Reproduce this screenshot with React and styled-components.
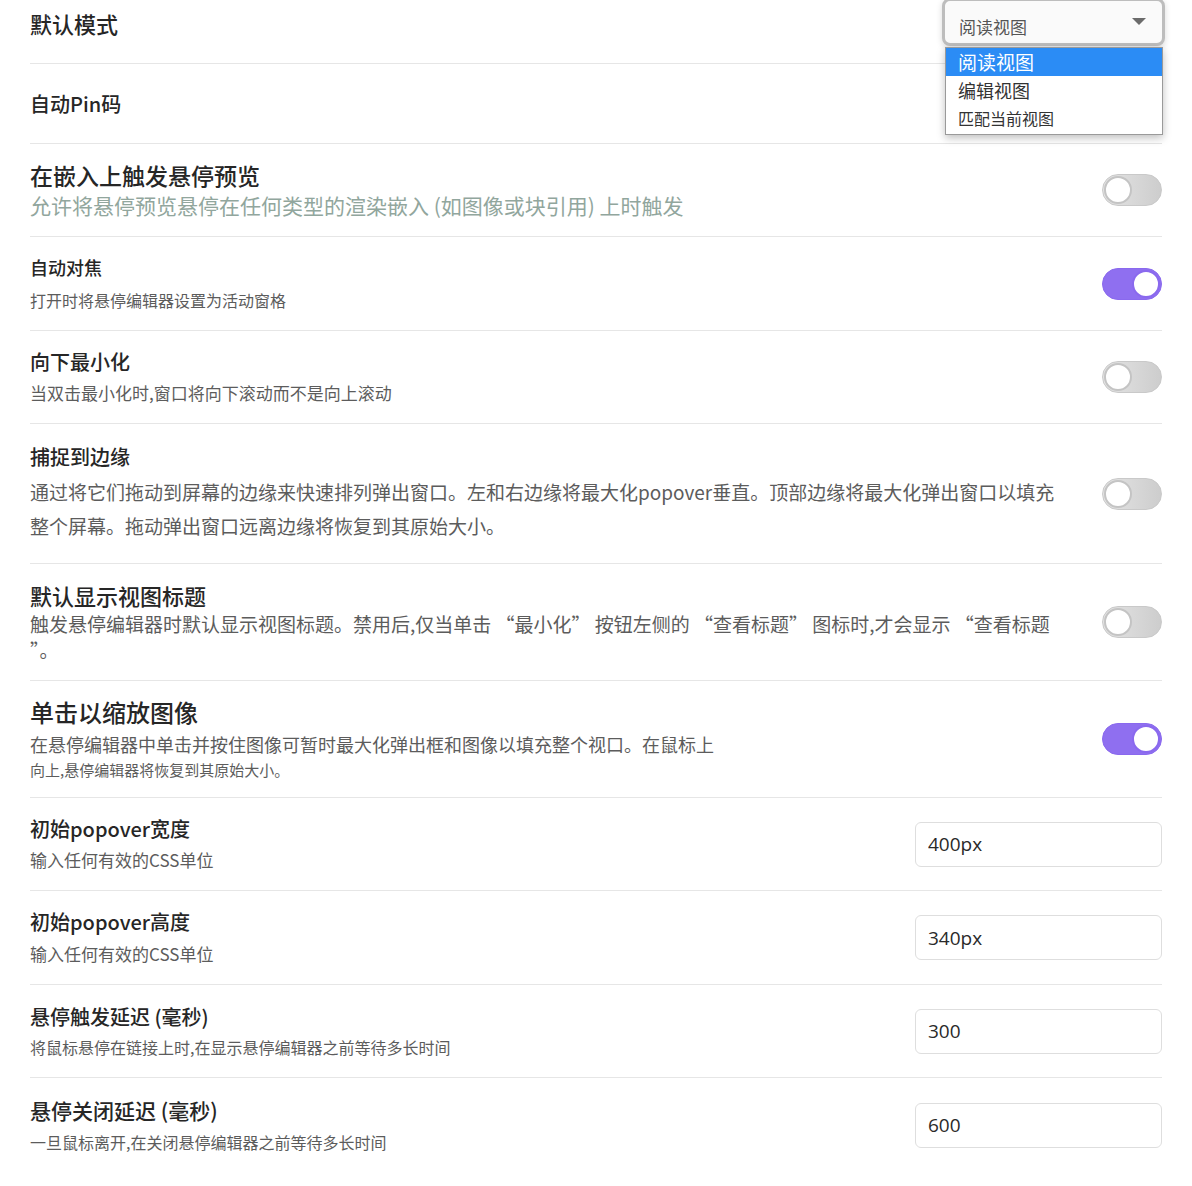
import React, { useState } from "react";
import styled, { createGlobalStyle } from "styled-components";

const GlobalStyle = createGlobalStyle`
  body {
    margin: 0;
    background: #ffffff;
    font-family: "Noto Sans CJK SC", "Noto Sans", sans-serif;
  }
`;

const rows = [
  { title: "默认模式", ts: 22, h: 64, pb: 16, control: "select" },
  { title: "自动Pin码", ts: 20, h: 80 },
  {
    title: "在嵌入上触发悬停预览",
    ts: 23,
    ds: 21,
    gap: 30,
    h: 93,
    tone: "#91a69d",
    desc: ["允许将悬停预览悬停在任何类型的渲染嵌入 (如图像或块引用) 上时触发"],
    control: "toggle",
  },
  {
    title: "自动对焦",
    ts: 18,
    ds: 16,
    gap: 32,
    h: 94,
    desc: ["打开时将悬停编辑器设置为活动窗格"],
    control: "toggle",
    on: true,
  },
  {
    title: "向下最小化",
    ts: 20,
    ds: 17,
    gap: 31,
    h: 93,
    desc: ["当双击最小化时,窗口将向下滚动而不是向上滚动"],
    control: "toggle",
  },
  {
    title: "捕捉到边缘",
    ts: 20,
    ds: 19,
    gap: 35,
    lh: 34,
    h: 140,
    desc: [
      "通过将它们拖动到屏幕的边缘来快速排列弹出窗口。左和右边缘将最大化popover垂直。顶部边缘将最大化弹出窗口以填充",
      "整个屏幕。拖动弹出窗口远离边缘将恢复到其原始大小。",
    ],
    control: "toggle",
  },
  {
    title: "默认显示视图标题",
    ts: 22,
    ds: 19,
    gap: 29,
    lh: 26,
    h: 117,
    desc: [
      "触发悬停编辑器时默认显示视图标题。禁用后,仅当单击 “最小化” 按钮左侧的 “查看标题” 图标时,才会显示 “查看标题",
      "”。",
    ],
    control: "toggle",
  },
  {
    title: "单击以缩放图像",
    ts: 24,
    ds: 18,
    gap: 33,
    lh: 25,
    h: 117,
    desc: [
      "在悬停编辑器中单击并按住图像可暂时最大化弹出框和图像以填充整个视口。在鼠标上",
      { text: "向上,悬停编辑器将恢复到其原始大小。", size: 15 },
    ],
    control: "toggle",
    on: true,
  },
  {
    title: "初始popover宽度",
    ts: 20,
    ds: 17,
    gap: 31,
    h: 93,
    desc: ["输入任何有效的CSS单位"],
    control: "input",
    value: "400px",
  },
  {
    title: "初始popover高度",
    ts: 20,
    ds: 17,
    gap: 32,
    h: 94,
    desc: ["输入任何有效的CSS单位"],
    control: "input",
    value: "340px",
  },
  {
    title: "悬停触发延迟 (毫秒)",
    ts: 20,
    ds: 16,
    gap: 30,
    h: 93,
    desc: ["将鼠标悬停在链接上时,在显示悬停编辑器之前等待多长时间"],
    control: "input",
    value: "300",
  },
  {
    title: "悬停关闭延迟 (毫秒)",
    ts: 21,
    ds: 16,
    gap: 32,
    h: 94,
    desc: ["一旦鼠标离开,在关闭悬停编辑器之前等待多长时间"],
    control: "input",
    value: "600",
    last: true,
  },
];

function Toggle({ initial }) {
  const [on, setOn] = useState(!!initial);
  return (
    <ToggleTrack $on={on} onClick={() => setOn(!on)}>
      <ToggleKnob $on={on} />
    </ToggleTrack>
  );
}

function ViewSelect() {
  return (
    <SelectWrap>
      <SelectBox>
        <span>阅读视图</span>
        <svg width="14" height="8" viewBox="0 0 14 8">
          <path d="M0 0 L14 0 L7 7 Z" fill="#6b6b6b" />
        </svg>
      </SelectBox>
      <OptionList>
        <OptionItem $active $size={19}>
          阅读视图
        </OptionItem>
        <OptionItem $size={18}>编辑视图</OptionItem>
        <OptionItem $size={16}>匹配当前视图</OptionItem>
      </OptionList>
    </SelectWrap>
  );
}

function SettingRow({ row }) {
  const tlh = Math.round(row.ts * 1.3);
  const dlh = row.lh || Math.round((row.ds || 16) * 1.4);
  const gap = row.gap ? row.gap - (tlh / 2 + dlh / 2) : 0;
  return (
    <Row $h={row.h} $pb={row.pb} $last={row.last}>
      <Info>
        <Title $size={row.ts} $lh={tlh}>
          {row.title}
        </Title>
        {row.desc && (
          <Desc $size={row.ds} $lh={dlh} $mt={gap} $tone={row.tone}>
            {row.desc.map((line, i) =>
              typeof line === "string" ? (
                <DescLine key={i}>{line}</DescLine>
              ) : (
                <DescLine key={i} $size={line.size}>
                  {line.text}
                </DescLine>
              )
            )}
          </Desc>
        )}
      </Info>
      {row.control === "toggle" && <Toggle initial={row.on} />}
      {row.control === "input" && <TextInput defaultValue={row.value} />}
      {row.control === "select" && <ViewSelect />}
    </Row>
  );
}

export default function App() {
  return (
    <>
      <GlobalStyle />
      <Page>
        {rows.map((row) => (
          <SettingRow key={row.title} row={row} />
        ))}
      </Page>
    </>
  );
}

const Page = styled.div`
  width: 1132px;
  padding: 0 30px;
`;

const Row = styled.div`
  box-sizing: border-box;
  height: ${(p) => p.$h}px;
  padding-bottom: ${(p) => p.$pb || 0}px;
  display: flex;
  align-items: center;
  justify-content: space-between;
  border-bottom: ${(p) => (p.$last ? "none" : "1px solid #e6e6e6")};
  position: relative;
`;

const Info = styled.div`
  display: flex;
  flex-direction: column;
  width: 1060px;
`;

const Title = styled.div`
  font-size: ${(p) => p.$size}px;
  line-height: ${(p) => p.$lh}px;
  color: #262626;
  font-weight: 500;
  white-space: nowrap;
`;

const Desc = styled.div`
  margin-top: ${(p) => p.$mt}px;
  font-size: ${(p) => p.$size}px;
  line-height: ${(p) => p.$lh}px;
  color: ${(p) => p.$tone || "#5c5c5c"};
`;

const DescLine = styled.div`
  white-space: nowrap;
  ${(p) => (p.$size ? `font-size: ${p.$size}px;` : "")}
`;

const ToggleTrack = styled.div`
  flex-shrink: 0;
  box-sizing: border-box;
  width: 60px;
  height: 32px;
  border-radius: 16px;
  padding: 2px;
  display: flex;
  justify-content: ${(p) => (p.$on ? "flex-end" : "flex-start")};
  background: ${(p) =>
    p.$on ? "#8f6ff0" : "linear-gradient(90deg, #e4e4e4, #cdcdcd)"};
  border: 1px solid ${(p) => (p.$on ? "#8a69ee" : "#c9c9c9")};
  cursor: pointer;
`;

const ToggleKnob = styled.div`
  box-sizing: border-box;
  width: 28px;
  height: 28px;
  margin: -1px;
  border-radius: 50%;
  background: #ffffff;
  border: 2px solid ${(p) => (p.$on ? "#8a69ee" : "#c4c4c4")};
`;

const TextInput = styled.input`
  flex-shrink: 0;
  box-sizing: border-box;
  width: 247px;
  height: 45px;
  border: 1px solid #dedede;
  border-radius: 6px;
  padding: 0 12px;
  font-family: "Open Sans", "Noto Sans", sans-serif;
  font-size: 19px;
  color: #2a2a2a;
  outline: none;
`;

const SelectWrap = styled.div`
  position: relative;
  align-self: flex-start;
  margin-top: -2px;
  margin-right: -3px;
`;

const SelectBox = styled.div`
  box-sizing: border-box;
  width: 223px;
  height: 48px;
  padding: 0 16px 0 14px;
  display: flex;
  align-items: center;
  justify-content: space-between;
  border: 3px solid #bdbdbd;
  border-radius: 8px;
  background: #fafafa;
  box-shadow: 0 2px 6px rgba(0, 0, 0, 0.15);
  font-size: 17px;
  color: #555555;
  span {
    padding-top: 8px;
  }
`;

const OptionList = styled.div`
  position: absolute;
  top: 49px;
  left: 3px;
  width: 216px;
  background: #ffffff;
  border: 1px solid #9a9a9a;
  box-shadow: 0 3px 8px rgba(0, 0, 0, 0.25);
  z-index: 2;
  padding-bottom: 2px;
`;

const OptionItem = styled.div`
  padding: 0 12px;
  height: 28px;
  line-height: 28px;
  font-size: ${(p) => p.$size}px;
  color: ${(p) => (p.$active ? "#ffffff" : "#333333")};
  background: ${(p) => (p.$active ? "#2b8cf5" : "transparent")};
`;
